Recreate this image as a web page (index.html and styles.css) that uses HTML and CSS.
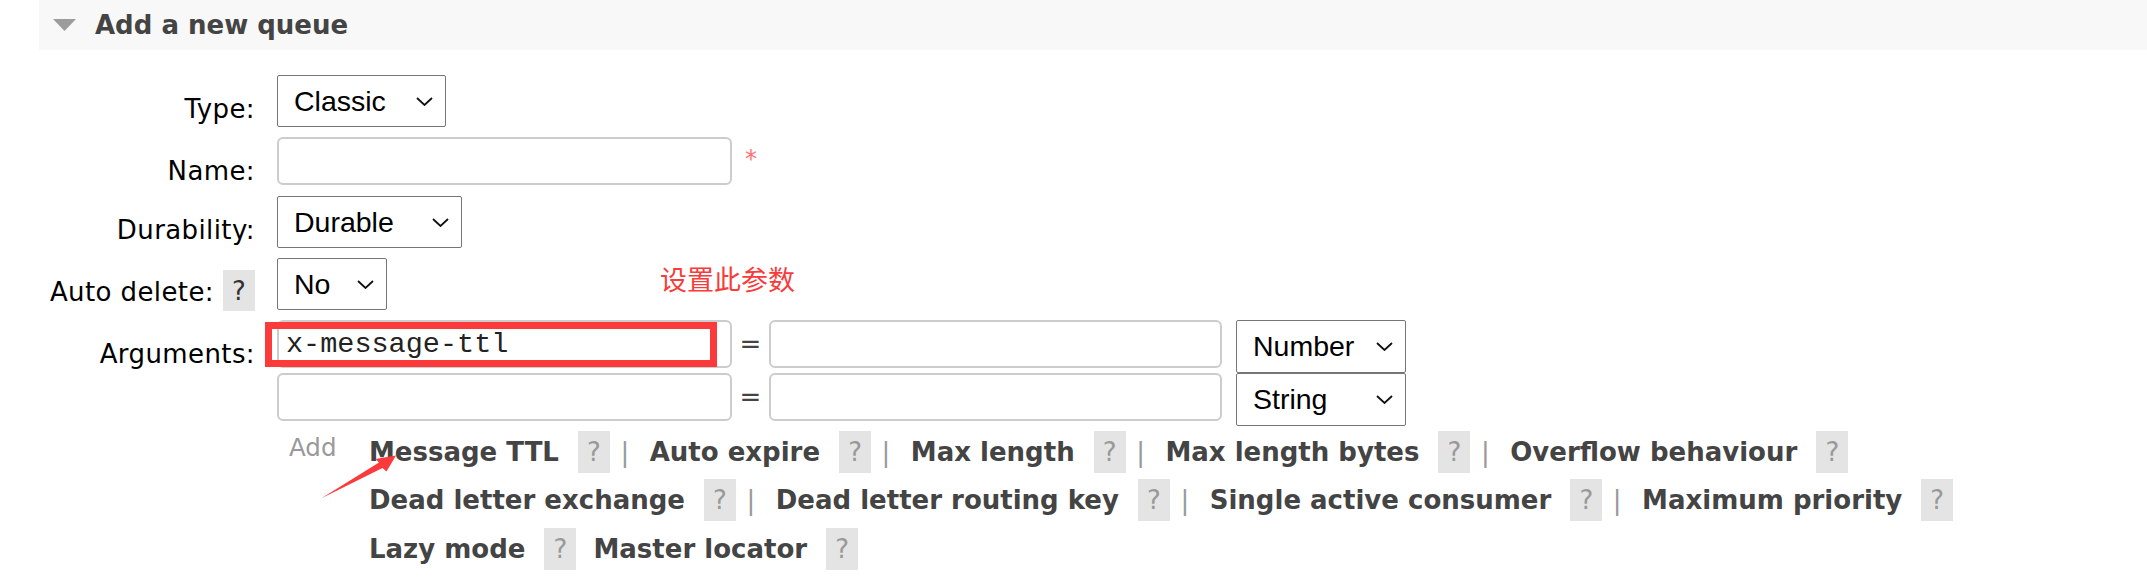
FILE: index.html
```html
<!DOCTYPE html>
<html lang="en">
<head>
<meta charset="utf-8">
<title>Add a new queue</title>
<link rel="stylesheet" href="styles.css">
</head>
<body>
<div class="page">
  <div class="section">
    <div class="section-head">
      <svg class="toggle" width="23" height="12" viewBox="0 0 23 12"><polygon points="0,0 23,0 11.5,12" fill="#9c9c9c"/></svg>
      <h2 class="section-title">Add a new queue</h2>
    </div>
    <div class="form">
      <div class="label">Type:</div>
      <div class="ctl">
        <div class="select w-type"><span>Classic</span><svg class="chev" width="17" height="9" viewBox="0 0 17 9"><polyline points="1,1 8.5,8 16,1" fill="none" stroke="#111" stroke-width="1.8"/></svg></div>
      </div>

      <div class="label">Name:</div>
      <div class="ctl">
        <input class="text" type="text"><span class="mand">*</span>
      </div>

      <div class="label">Durability:</div>
      <div class="ctl">
        <div class="select w-dur"><span>Durable</span><svg class="chev" width="17" height="9" viewBox="0 0 17 9"><polyline points="1,1 8.5,8 16,1" fill="none" stroke="#111" stroke-width="1.8"/></svg></div>
      </div>

      <div class="label">Auto delete:<span class="help dark">?</span></div>
      <div class="ctl">
        <div class="select w-no"><span>No</span><svg class="chev" width="17" height="9" viewBox="0 0 17 9"><polyline points="1,1 8.5,8 16,1" fill="none" stroke="#111" stroke-width="1.8"/></svg></div>
      </div>

      <div class="label">Arguments:</div>
      <div class="ctl args">
        <div class="arg-row">
          <input class="text mono" type="text" value="x-message-ttl">
          <span class="eq">=</span>
          <input class="text" type="text">
          <div class="select w-arg"><span>Number</span><svg class="chev" width="17" height="9" viewBox="0 0 17 9"><polyline points="1,1 8.5,8 16,1" fill="none" stroke="#111" stroke-width="1.8"/></svg></div>
        </div>
        <div class="arg-row">
          <input class="text mono" type="text">
          <span class="eq">=</span>
          <input class="text" type="text">
          <div class="select w-arg"><span>String</span><svg class="chev" width="17" height="9" viewBox="0 0 17 9"><polyline points="1,1 8.5,8 16,1" fill="none" stroke="#111" stroke-width="1.8"/></svg></div>
        </div>
        <div class="arg-links">
          <span class="add">Add</span>
          <div class="links">
            <div class="link-row">
              <span class="link">Message TTL</span><span class="help">?</span><span class="sep">|</span>
              <span class="link">Auto expire</span><span class="help">?</span><span class="sep">|</span>
              <span class="link">Max length</span><span class="help">?</span><span class="sep">|</span>
              <span class="link">Max length bytes</span><span class="help">?</span><span class="sep">|</span>
              <span class="link">Overflow behaviour</span><span class="help">?</span>
            </div>
            <div class="link-row">
              <span class="link">Dead letter exchange</span><span class="help">?</span><span class="sep">|</span>
              <span class="link">Dead letter routing key</span><span class="help">?</span><span class="sep">|</span>
              <span class="link">Single active consumer</span><span class="help">?</span><span class="sep">|</span>
              <span class="link">Maximum priority</span><span class="help">?</span>
            </div>
            <div class="link-row">
              <span class="link">Lazy mode</span><span class="help">?</span>
              <span class="link next">Master locator</span><span class="help">?</span>
            </div>
          </div>
        </div>
      </div>
    </div>
  </div>

  <div class="note-text">设置此参数</div>
  <div class="note-box"></div>
  <svg class="note-arrow" width="2147" height="577" viewBox="0 0 2147 577">
    <polygon points="321,498.5 382.5,468 386.5,471.5 396,455.5 375.5,459 379,462.5" fill="#fb3b3b"/>
  </svg>
</div>
</body>
</html>
```

FILE: styles.css
```css
html, body {
  margin: 0;
  padding: 0;
  background: #ffffff;
}

.page {
  position: relative;
  width: 2147px;
  height: 577px;
  overflow: hidden;
  font-family: "DejaVu Sans", Verdana, sans-serif;
  font-size: 26px;
  color: #000;
}

.section {
  margin-left: 39px;
}

.section-head {
  display: flex;
  align-items: center;
  height: 50px;
  background: #f8f8f8;
}

.toggle {
  margin-left: 14px;
  flex: none;
}

.section-title {
  margin: 0 0 0 19px;
  font-size: 26px;
  font-weight: bold;
  line-height: 50px;
  color: #444;
}

.form {
  display: grid;
  grid-template-columns: 216px auto;
  column-gap: 22px;
  row-gap: 10px;
  justify-content: start;
  margin-top: 25px;
}

.label {
  display: flex;
  justify-content: flex-end;
  align-items: center;
  padding-top: 19px;
  line-height: 30px;
  height: 30px;
  white-space: nowrap;
  letter-spacing: 0.4px;
  color: #000;
}

.ctl {
  display: flex;
  align-items: flex-start;
}

.help {
  display: inline-flex;
  align-items: center;
  justify-content: center;
  width: 32px;
  height: 42px;
  background: #e4e4e4;
  color: #999;
  font-size: 26px;
  letter-spacing: 0;
  flex: none;
}

.help.dark {
  color: #333;
  height: 41px;
  margin: -7px 0 -4px 9px;
}

.select {
  display: flex;
  align-items: center;
  justify-content: space-between;
  box-sizing: border-box;
  height: 52px;
  padding: 0 12px 0 16px;
  border: 1px solid #767676;
  border-radius: 2px;
  background: #fff;
  font-family: "Liberation Sans", Arial, sans-serif;
  font-size: 28.5px;
  color: #000;
  flex: none;
}

.chev {
  flex: none;
}

.w-type { width: 169px; }
.w-dur { width: 185px; }
.w-no { width: 110px; }
.w-arg { width: 170px; height: 53px; margin-left: 14px; }

.text {
  box-sizing: border-box;
  width: 455px;
  height: 48px;
  margin: 0;
  padding: 0 7px;
  border: 2px solid #cccccc;
  border-radius: 6px;
  background: #fff;
  font-family: "Liberation Sans", Arial, sans-serif;
  font-size: 28.5px;
  color: #222;
  outline: none;
  flex: none;
}

.text.mono {
  font-family: "Liberation Mono", "Courier New", monospace;
}

.arg-row .text + .eq + .text {
  width: 453px;
}

.mand {
  margin: 10px 0 0 13px;
  font-size: 24px;
  line-height: 24px;
  color: #ff7070;
}

.args {
  flex-direction: column;
}

.arg-row {
  display: flex;
  align-items: flex-start;
  height: 53px;
}

.eq {
  width: 37px;
  text-align: center;
  line-height: 48px;
  color: #444;
  flex: none;
}

.arg-links {
  display: flex;
  align-items: flex-start;
}

.add {
  width: 80px;
  margin: 7px 0 0 12px;
  font-size: 24.5px;
  line-height: 30px;
  color: #999;
  flex: none;
}

.links {
  display: flex;
  flex-direction: column;
  margin-top: 1.5px;
}

.link-row {
  display: flex;
  align-items: center;
  height: 48.5px;
  white-space: nowrap;
}

.link {
  margin-right: 19px;
  font-weight: bold;
  color: #444;
}

.link.next {
  margin-left: 17px;
}

.sep {
  padding: 0 20.5px 0 10.5px;
  color: #999;
}

.note-text {
  position: absolute;
  left: 660px;
  top: 262px;
  font-family: "Noto Sans CJK SC", sans-serif;
  font-size: 27px;
  line-height: 34px;
  color: #f83c3c;
  white-space: nowrap;
}

.note-box {
  position: absolute;
  left: 265px;
  top: 322px;
  width: 452px;
  height: 45px;
  box-sizing: border-box;
  border: 7px solid #fb3b3b;
}

.note-arrow {
  position: absolute;
  left: 0;
  top: 0;
  pointer-events: none;
}
```
